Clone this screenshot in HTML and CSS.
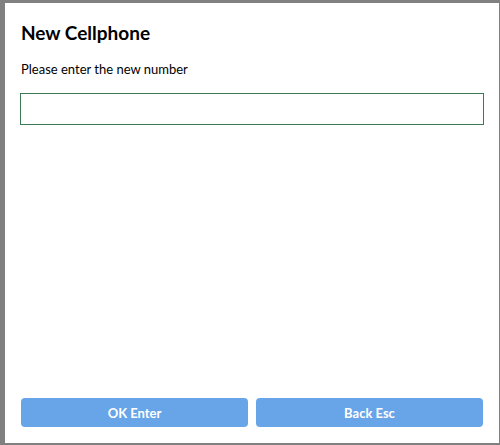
FILE: index.html
```html
<!DOCTYPE html>
<html>
<head>
<meta charset="utf-8">
<link rel="stylesheet" href="styles.css">
</head>
<body>
<div class="dialog">
  <h1 class="title">New Cellphone</h1>
  <p class="label">Please enter the new number</p>
  <input class="field" type="text">
  <div class="spacer"></div>
  <div class="actions">
    <button class="btn">OK Enter</button>
    <button class="btn">Back Esc</button>
  </div>
</div>
</body>
</html>
```
FILE: styles.css
```css
html, body {
  margin: 0;
  padding: 0;
  height: 100%;
}
body {
  background: #808080;
  padding: 3px 1px 2px 5px;
  box-sizing: border-box;
  font-family: Lato, "Open Sans", sans-serif;
}
.dialog {
  background: #ffffff;
  height: 100%;
  box-sizing: border-box;
  padding: 19px 15px 16px 15px;
  display: flex;
  flex-direction: column;
}
.title {
  margin: 0 0 0 1px;
  font-size: 19px;
  font-weight: 700;
  line-height: 22px;
  color: #000;
}
.label {
  margin: 17px 0 0 1px;
  font-size: 13px;
  line-height: 16px;
  color: #000;
}
.field {
  margin: 16px 0 0 0;
  height: 32px;
  box-sizing: border-box;
  border: 1px solid #3c7a55;
  outline: none;
  padding: 0 6px;
  width: 464px;
  font-family: inherit;
}
.spacer { flex: 1; }
.actions {
  display: flex;
  gap: 8px;
  padding-left: 1px;
  padding-right: 1px;
}
.btn {
  flex: 1;
  height: 29px;
  border: none;
  border-radius: 4px;
  background: #68a4e8;
  color: #fff;
  font-family: inherit;
  font-size: 13px;
  font-weight: 700;
  padding: 0;
}
```
